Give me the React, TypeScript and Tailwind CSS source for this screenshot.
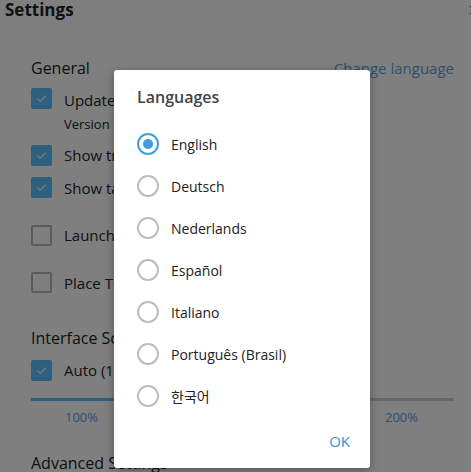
import React, { useState } from "react";

const languages = [
  "English",
  "Deutsch",
  "Nederlands",
  "Español",
  "Italiano",
  "Português (Brasil)",
  "한국어",
];

function Checkbox({ checked }: { checked: boolean }) {
  return (
    <div
      className={
        checked
          ? "w-[21px] h-[21px] rounded-[2px] bg-[#58c0fc] flex items-center justify-center shrink-0"
          : "w-[21px] h-[21px] rounded-[2px] border-2 border-[#b8b8b8] bg-white shrink-0"
      }
    >
      {checked && (
        <svg width="13" height="13" viewBox="0 0 24 24" fill="none" stroke="#e8e8e8" strokeWidth={3} strokeLinecap="round" strokeLinejoin="round">
          <path d="M5 12.5l4.5 4.5L19 7.5" />
        </svg>
      )}
    </div>
  );
}

function Radio({ checked }: { checked: boolean }) {
  return (
    <div
      className={
        checked
          ? "w-[22px] h-[22px] rounded-full border-2 border-[#3d9fe0] flex items-center justify-center shrink-0"
          : "w-[22px] h-[22px] rounded-full border-2 border-[#bdbdbd] shrink-0"
      }
    >
      {checked && <div className="w-[10px] h-[10px] rounded-full bg-[#3d9fe0]" />}
    </div>
  );
}

export default function App() {
  const [lang, setLang] = useState("English");

  return (
    <div className="relative w-[471px] h-[472px] overflow-hidden bg-white text-[#222] font-['Open_Sans','Noto_Sans','Noto_Sans_CJK_KR',sans-serif]">
      {/* Settings page */}
      <div className="flex items-center justify-between pl-[5px] h-[20px]">
        <span className="text-[17px] font-bold leading-[20px]">Settings</span>
        <span className="text-[20px] leading-[20px] text-[#555] translate-x-[9px]">×</span>
      </div>

      <div className="px-[31px] pr-[17px]">
        <div className="flex items-center justify-between mt-[37px] h-[22px]">
          <span className="text-[16px] font-medium">General</span>
          <span className="text-[15px] text-[#5aa0dc]">Change language</span>
        </div>

        <div className="flex items-start gap-[12px] mt-[9px]">
          <Checkbox checked />
          <div className="flex flex-col">
            <span className="text-[15px] leading-[22px] mt-[1px]">Update automatically</span>
            <span className="text-[13px] leading-[20px] mt-[3px]">Version 1.4.2</span>
          </div>
        </div>

        <div className="flex items-center gap-[12px] mt-[10px]">
          <Checkbox checked />
          <span className="text-[15px]">Show tray icon</span>
        </div>
        <div className="flex items-center gap-[12px] mt-[10px]">
          <Checkbox checked />
          <span className="text-[15px]">Show taskbar icon</span>
        </div>
        <div className="flex items-center gap-[12px] mt-[25px]">
          <Checkbox checked={false} />
          <span className="text-[15px]">Launch at startup</span>
        </div>
        <div className="flex items-center gap-[12px] mt-[25px]">
          <Checkbox checked={false} />
          <span className="text-[15px]">Place Telegram in system tray</span>
        </div>

        <div className="mt-[33px] h-[22px] flex items-center">
          <span className="text-[16px] font-medium">Interface Scale</span>
        </div>
        <div className="flex items-center gap-[12px] mt-[10px]">
          <Checkbox checked />
          <span className="text-[15px]">Auto (100%)</span>
        </div>

        <div className="mt-[16px] h-[3px] flex">
          <div className="w-[200px] bg-[#58c0fc]" />
          <div className="flex-1 bg-[#d0d0d0]" />
        </div>
        <div className="flex justify-between px-[34px] pr-[36px] mt-[7px] text-[13px] text-[#5aa0dc]">
          <span>100%</span>
          <span>200%</span>
        </div>

        <div className="mt-[24px] text-[16px] font-medium">Advanced Settings</div>
      </div>

      {/* Overlay + dialog */}
      <div className="absolute inset-0 bg-black/50 pl-[114px] pt-[70px]">
        <div className="w-[256px] h-[398px] bg-white rounded-[3px] shadow-[0_2px_8px_rgba(0,0,0,0.35)] flex flex-col pl-[23px] pr-[20px]">
          <div className="mt-[16px] h-[22px] flex items-center text-[16px] font-semibold text-[#444]">
            Languages
          </div>
          <div className="flex flex-col mt-[15px]">
            {languages.map((l) => (
              <button
                key={l}
                onClick={() => setLang(l)}
                className="flex items-center gap-[12px] h-[42px] text-left"
              >
                <Radio checked={lang === l} />
                <span className="text-[14px] text-[#222]">{l}</span>
              </button>
            ))}
          </div>
          <div className="flex justify-end mt-[13px]">
            <button className="text-[15px] font-medium text-[#3592d2] h-[22px]">OK</button>
          </div>
        </div>
      </div>
    </div>
  );
}
